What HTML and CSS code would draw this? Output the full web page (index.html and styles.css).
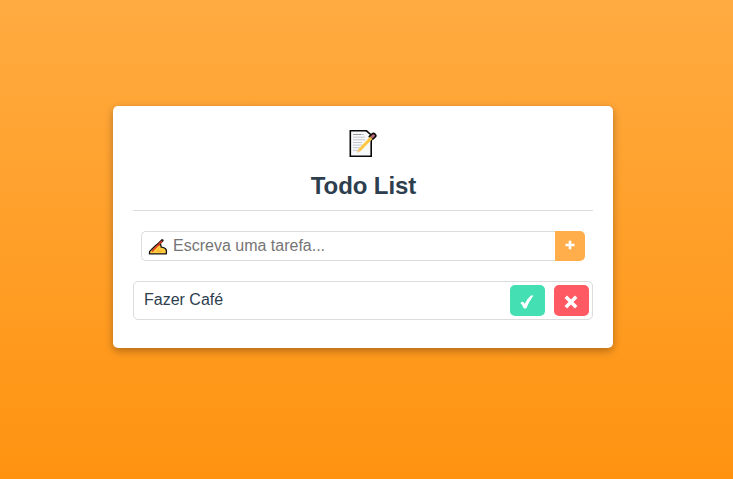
FILE: index.html
```html
<!DOCTYPE html>
<html lang="pt-BR">
<head>
<meta charset="utf-8">
<title>Todo List</title>
<link rel="stylesheet" href="styles.css">
</head>
<body>
<main class="card">
  <header class="header">
    <svg class="memo" viewBox="0 0 30 30" aria-hidden="true">
      <path d="M2.3 2.8H18.5L23.2 7V28.2H2.3Z" fill="#f7f8fa" stroke="#080808" stroke-width="1.6"/>
      <path d="M5 6.5h11M5 9.2h12M5 11.8h12M5 14.5h9M5 17.1h11M5 19.7h10M5 22.3h7" stroke="#c2c7ce" stroke-width="1"/>
      <path d="M5 6.5h8" stroke="#999" stroke-width="1"/>
      <path d="M9 24.8L10.5 21 22.3 8.5 24.6 10.8 12.8 23Z" fill="#ffcc4d"/>
      <path d="M9 24.8L10.5 21.3 12.4 23.1Z" fill="#f2c49a"/>
      <path d="M12 21.8L23.2 10" stroke="#f3b33a" stroke-width=".7"/>
      <path d="M21.2 8.7L24 6Q25.5 4.6 27.1 6.2T27.1 9L24.5 11.5Z" fill="#b96a78" stroke="#080808" stroke-width="1.6" stroke-linejoin="round"/>
      <path d="M21.5 9L24.2 11.5" stroke="#ffcc4d" stroke-width="1.4"/>
    </svg>
    <h1 class="title">Todo List</h1>
  </header>
  <form class="form">
    <div class="field">
      <svg class="hand" viewBox="0 0 20 16" aria-hidden="true">
        <path d="M1.4 14.8Q1 12.2 3 11L8.5 5.8Q11 4.2 12.8 5.8L13.2 8.2Q17.8 8.6 18.4 11.5V14.8Z" fill="#ffc83d" stroke="#161310" stroke-width="1.3" stroke-linejoin="round"/>
        <path d="M9 12.2H13" stroke="#eaa52e" stroke-width=".8"/>
        <path d="M10.5 5.2L14.2 1.6" stroke="#241a16" stroke-width="2.8" stroke-linecap="round"/>
        <path d="M4 12.5L14 2" stroke="#e73a22" stroke-width="1.5"/>
      </svg>
      <input class="input" type="text" placeholder="Escreva uma tarefa...">
    </div>
    <button class="add" type="button" aria-label="Adicionar">
      <svg viewBox="0 0 10 10" width="10" height="10"><path d="M5 .8V9.2M.5 5H9.5" stroke="#fff" stroke-width="2.6"/></svg>
    </button>
  </form>
  <ul class="list">
    <li class="item">
      <span class="task">Fazer Café</span>
      <button class="action done" type="button" aria-label="Concluir">
        <svg viewBox="0 0 14 14" width="14" height="14"><path d="M.4 8.1Q2.2 6.2 3.4 7.1L4.7 8.8Q7.4 3.2 10.7.7Q12.2-.1 13.3.8Q9 6.6 6.5 13Q5 14.2 3.6 13Q2.6 10.2.4 8.1Z" fill="#fff"/></svg>
      </button>
      <button class="action remove" type="button" aria-label="Remover">
        <svg viewBox="0 0 14 14" width="14" height="14"><path d="M1.8 1.8L12.2 12.2M12.2 1.8L1.8 12.2" stroke="#fff" stroke-width="3.5"/></svg>
      </button>
    </li>
  </ul>
</main>
</body>
</html>
```
FILE: styles.css
```css
* {
  box-sizing: border-box;
}

body {
  margin: 0;
  height: 479px;
  padding: 106px 0 0 113px;
  overflow: hidden;
  background: linear-gradient(#ffab41, #ff9310);
  color: #2d3e4e;
  font-family: "Liberation Sans", Arial, sans-serif;
  font-size: 16px;
}

.card {
  width: 500px;
  height: 242px;
  padding: 20px;
  border-radius: 5px;
  background: #fff;
  box-shadow: 0 3px 8px rgba(0, 0, 0, .3);
}

.header {
  display: flex;
  flex-direction: column;
  align-items: center;
  height: 85px;
  padding-top: 2px;
  border-bottom: 1px solid #dcdcdc;
}

.memo {
  width: 30px;
  height: 30px;
}

.title {
  margin: 14px 0 0 1px;
  font-size: 24px;
  line-height: 28px;
  letter-spacing: -.1px;
}

.form {
  display: flex;
  height: 30px;
  margin: 20px 8px;
}

.field {
  display: flex;
  flex: 1;
  align-items: center;
  padding-left: 6px;
  border: 1px solid #dcdcdc;
  border-right: 0;
  border-radius: 5px 0 0 5px;
}

.hand {
  width: 20px;
  height: 16px;
  margin-top: 1px;
}

.input {
  flex: 1;
  min-width: 0;
  margin-left: 5px;
  padding: 0;
  border: 0;
  outline: 0;
  background: none;
  font: inherit;
}

.input::placeholder {
  color: #757575;
}

.add,
.action {
  display: flex;
  align-items: center;
  justify-content: center;
  padding: 0;
  border: 0;
}

.add {
  width: 30px;
  border-radius: 0 5px 5px 0;
  background: #ffae4b;
}

.add svg {
  margin: 0 1px 2px 0;
}

.list {
  margin: 0;
  padding: 0;
  list-style: none;
}

.item {
  display: flex;
  align-items: center;
  gap: 9px;
  height: 39px;
  padding: 0 3px 0 10px;
  border: 1px solid #dcdcdc;
  border-radius: 5px;
}

.task {
  flex: 1;
  margin-bottom: 2px;
}

.action {
  width: 35px;
  height: 31px;
  padding: 2px 1px 0 0;
  border-radius: 5px;
}

.done {
  background: #44dfb3;
}

.remove {
  background: #ff5964;
}
```
